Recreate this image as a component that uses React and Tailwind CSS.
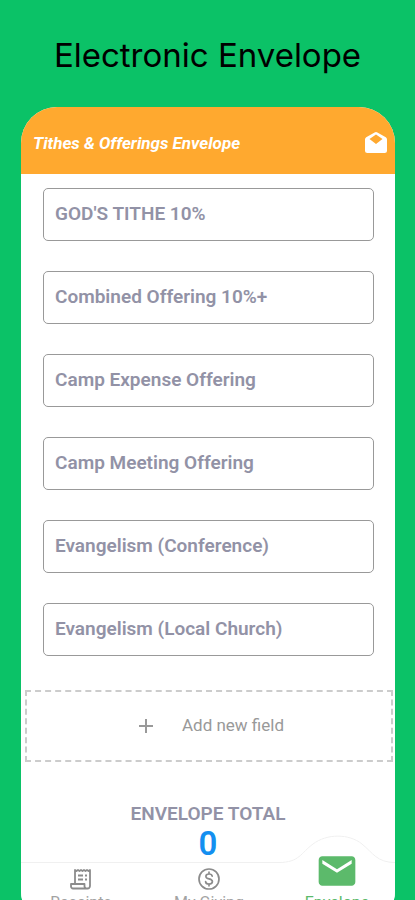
import { MdAdd, MdEmail } from "react-icons/md";

// Offering fields shown on the envelope
const fields = [
  { name: "tithe", label: "GOD'S TITHE 10%" },
  { name: "combined", label: "Combined Offering 10%+" },
  { name: "camp-expense", label: "Camp Expense Offering" },
  { name: "camp-meeting", label: "Camp Meeting Offering" },
  { name: "evangelism-conference", label: "Evangelism (Conference)" },
  { name: "evangelism-local", label: "Evangelism (Local Church)" },
];

function OpenEnvelopeIcon() {
  return (
    <svg aria-hidden="true" viewBox="0 0 22 21" className="h-[21px] w-[22px] fill-white">
      <path
        fillRule="evenodd"
        d="M9.600.5Q11-.3 12.400.5L20.800 5.300Q22 6 22 7.500V18.500Q22 21 19.500 21H2.500Q0 21 0 18.500V7.500Q0 6 1.200 5.300ZM11 2.500 4.500 7 11 12 17.500 7Z"
      />
    </svg>
  );
}

function ReceiptIcon() {
  return (
    <svg
      aria-hidden="true"
      viewBox="0 0 24 24"
      className="size-6 fill-none stroke-[#8c8c8c] stroke-[1.8]"
      strokeLinejoin="round"
    >
      <path d="M6 16V3l1.500 1L9 3l1.500 1L12 3l1.500 1L15 3l1.500 1L18 3l1.500 1L21 3V19a2.500 2.500 0 0 1-2.500 2.500H4A2 2 0 0 1 2 19.500V17H15.500V19.500A2.500 2.500 0 0 0 18.500 21.500" />
      <path d="M9 8.500h5M9 12.500h5M16 8.500h2M16 12.500h2" />
    </svg>
  );
}

function DollarIcon() {
  return (
    <svg
      aria-hidden="true"
      viewBox="0 0 24 24"
      className="size-6 fill-none stroke-[#8c8c8c] stroke-[1.7]"
      strokeLinecap="round"
    >
      <circle cx="12" cy="12" r="10" />
      <path d="M15.200 9.200C15 7.700 13.800 7 12 7S8.900 7.900 8.900 9.400C8.900 12.700 15.400 11 15.400 14.500 15.400 16.100 14 17 12 17S8.700 16.100 8.600 14.600M12 5.200V7M12 17v1.800" />
    </svg>
  );
}

function Header() {
  return (
    <header className="flex h-[67px] items-center justify-between bg-[#ffa92f] pt-1 pr-2 pl-3 text-white">
      <h2 className="text-[17px] leading-6 font-bold italic">
        Tithes &amp; Offerings Envelope
      </h2>
      <button type="button" aria-label="Open envelope">
        <OpenEnvelopeIcon />
      </button>
    </header>
  );
}

function BottomNav() {
  return (
    <nav className="relative flex justify-between border-t border-[#f0f0f0] bg-white pt-1 pr-[22px] pb-4 pl-6 text-base leading-4 text-[#a3a3a3]">
      <a href="#receipts" className="flex w-[72px] flex-col items-center gap-1">
        <ReceiptIcon />
        Receipts
      </a>
      <a href="#giving" className="flex w-[72px] flex-col items-center gap-1 whitespace-nowrap">
        <DollarIcon />
        My Giving
      </a>
      <a
        href="#envelope"
        aria-current="page"
        className="relative flex w-[72px] flex-col items-center gap-0.5 text-[#5cba6b]"
      >
        {/* Raised bump behind the active tab */}
        <svg
          aria-hidden="true"
          viewBox="0 0 116 30"
          className="absolute -top-8 -left-[22px] h-[30px] w-[116px]"
        >
          <path
            d="M0 27.500C20 27.500 22 18 34 9 48-1.500 70-1.500 83 9 94 18 98 27.500 116 27.500V30H0Z"
            className="fill-white"
          />
          <path
            d="M0 27.500C20 27.500 22 18 34 9 48-1.500 70-1.500 83 9 94 18 98 27.500 116 27.500"
            className="fill-none stroke-[#f0f0f0]"
          />
        </svg>
        <MdEmail aria-hidden="true" className="relative -mt-[18px] size-11" />
        Envelope
      </a>
    </nav>
  );
}

export default function App() {
  return (
    <main className="h-screen overflow-hidden bg-[#0bc267] px-5 font-['Roboto',sans-serif]">
      <h1 className="pt-[33px] text-center font-['Inter',sans-serif] text-[33px] leading-11 text-black">
        Electronic Envelope
      </h1>

      <div className="mt-[30px] ml-px overflow-hidden rounded-[36px] bg-white">
        <Header />

        <form>
          <div className="flex flex-col gap-[30px] pt-3.5 pr-[21px] pl-[22px]">
            {fields.map((field) => (
              <input
                key={field.name}
                type="text"
                name={field.name}
                aria-label={field.label}
                placeholder={field.label}
                className="h-[53px] w-full rounded-[5px] border border-[#999999] px-[11px] pb-0.5 text-[19px] font-semibold text-[#55556a] outline-none placeholder:text-[#9292a6]"
              />
            ))}
          </div>

          <div className="pt-[34px] pr-0.5 pl-1">
            <button
              type="button"
              className="flex h-[72px] w-full items-center justify-center gap-6 border-2 border-dashed border-[#cccccc] text-[17px] text-[#999999]"
            >
              <MdAdd aria-hidden="true" className="size-6" />
              Add new field
            </button>
          </div>

          <div className="flex flex-col items-center pt-10">
            <label htmlFor="total" className="text-[19px] leading-6 font-semibold text-[#9292a6]">
              ENVELOPE TOTAL
            </label>
            <output id="total" className="h-9 text-[33px] leading-9 font-semibold text-[#148ff0]">
              0
            </output>
          </div>
        </form>

        <BottomNav />
      </div>
    </main>
  );
}
